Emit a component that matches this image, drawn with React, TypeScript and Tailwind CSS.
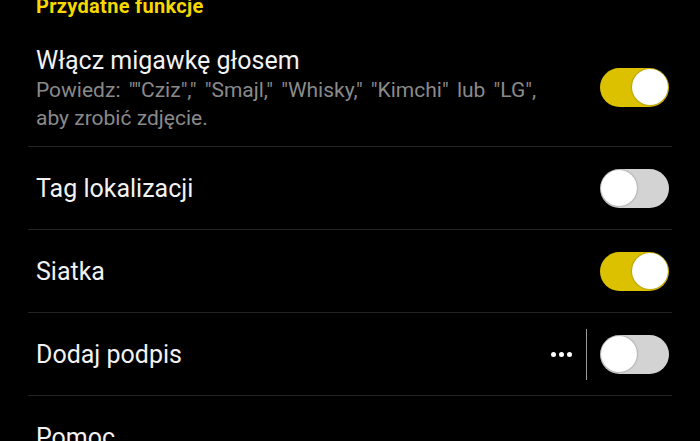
import React from "react";

function Toggle({ on }: { on: boolean }) {
  return (
    <div
      className={
        "w-[69px] h-[39px] rounded-full flex items-center px-[1px] shrink-0 " +
        (on ? "bg-[#dcc100] justify-end" : "bg-[#d3d3d3] justify-start")
      }
    >
      <div className="w-[36px] h-[36px] rounded-full bg-white shadow-[0_0_2px_rgba(0,0,0,0.45)]" />
    </div>
  );
}

function Divider() {
  return <div className="mx-[28px] h-px bg-[#242424]" />;
}

function Row({ label, on, extra }: { label: string; on?: boolean; extra?: boolean }) {
  return (
    <div className="h-[82px] flex items-center pl-[36px] pr-[31px]">
      <div className="flex-1 text-[25px] leading-[30px] text-[#f2f2f2] pt-[2px]">{label}</div>
      {extra && (
        <div className="flex items-center mr-[13px]">
          <div className="flex gap-[3px] mr-[14px]">
            <span className="w-[5px] h-[5px] rounded-full bg-white" />
            <span className="w-[5px] h-[5px] rounded-full bg-white" />
            <span className="w-[5px] h-[5px] rounded-full bg-white" />
          </div>
          <div className="w-px h-[51px] bg-[#9a9a9a]" />
        </div>
      )}
      {on !== undefined && <Toggle on={on} />}
    </div>
  );
}

export default function App() {
  return (
    <div
      className="w-[700px] h-[441px] bg-black overflow-hidden"
      style={{ fontFamily: "Roboto, 'Noto Sans', sans-serif" }}
    >
      <div className="mt-[-6px] pl-[36px] text-[20px] leading-[24px] font-bold tracking-[0.3px] text-[#f5d800]">
        Przydatne funkcje
      </div>
      <div className="mt-[28px] flex items-center pl-[36px] pr-[31px] pb-[14px]">
        <div className="flex-1">
          <div className="text-[25px] leading-[30px] text-[#f2f2f2]">Włącz migawkę głosem</div>
          <div className="text-[21px] leading-[28px] text-[#8a8a8a]">
            <span className="[word-spacing:3px]">
              Powiedz: ""Cziz"," "Smajl," "Whisky," "Kimchi" lub "LG",
            </span>
            <br />
            aby zrobić zdjęcie.
          </div>
        </div>
        <div className="mb-[4px]">
          <Toggle on={true} />
        </div>
      </div>
      <Divider />
      <Row label="Tag lokalizacji" on={false} />
      <Divider />
      <Row label="Siatka" on={true} />
      <Divider />
      <Row label="Dodaj podpis" on={false} extra />
      <Divider />
      <Row label="Pomoc" />
    </div>
  );
}
